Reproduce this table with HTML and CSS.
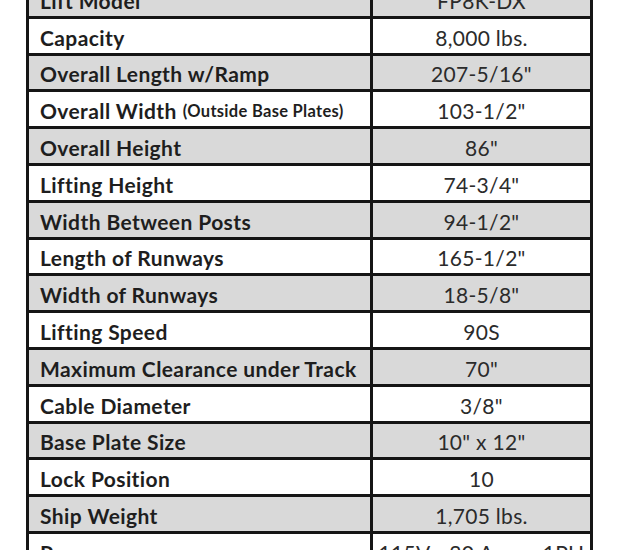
FILE: index.html
```html
<!DOCTYPE html>
<html>
<head>
<meta charset="utf-8">
<link rel="stylesheet" href="styles.css">
</head>
<body>
<div class="spec">
  <div class="row gray"><div class="label">Lift Model</div><div class="value">FP8K-DX</div></div>
  <div class="row"><div class="label">Capacity</div><div class="value">8,000 lbs.</div></div>
  <div class="row gray"><div class="label">Overall Length w/Ramp</div><div class="value">207-5/16"</div></div>
  <div class="row"><div class="label">Overall Width <span class="small">(Outside Base Plates)</span></div><div class="value">103-1/2"</div></div>
  <div class="row gray"><div class="label">Overall Height</div><div class="value">86"</div></div>
  <div class="row"><div class="label">Lifting Height</div><div class="value">74-3/4"</div></div>
  <div class="row gray"><div class="label">Width Between Posts</div><div class="value">94-1/2"</div></div>
  <div class="row"><div class="label">Length of Runways</div><div class="value">165-1/2"</div></div>
  <div class="row gray"><div class="label">Width of Runways</div><div class="value">18-5/8"</div></div>
  <div class="row"><div class="label">Lifting Speed</div><div class="value">90S</div></div>
  <div class="row gray"><div class="label">Maximum Clearance under Track</div><div class="value">70"</div></div>
  <div class="row"><div class="label">Cable Diameter</div><div class="value">3/8"</div></div>
  <div class="row gray"><div class="label">Base Plate Size</div><div class="value">10" x 12"</div></div>
  <div class="row"><div class="label">Lock Position</div><div class="value">10</div></div>
  <div class="row gray"><div class="label">Ship Weight</div><div class="value">1,705 lbs.</div></div>
  <div class="row"><div class="label">Power</div><div class="value">115V - 20 Amp - 1PH</div></div>
</div>
</body>
</html>
```
FILE: styles.css
```css
html, body {
  margin: 0;
  padding: 0;
  background: #ffffff;
  overflow: hidden;
}
body {
  width: 620px;
  height: 550px;
}
.spec {
  margin: -21px 0 0 26px;
  width: 567px;
  box-sizing: border-box;
  background: #151515;
  padding: 3px;
  display: grid;
  grid-auto-rows: 33.8px;
  row-gap: 3px;
  font-family: Lato, "Open Sans", sans-serif;
  font-size: 21px;
}
.row {
  display: grid;
  grid-template-columns: 341px 217px;
  column-gap: 3px;
}
.row > div {
  background: #ffffff;
  display: flex;
  align-items: center;
  padding-top: 3px;
  box-sizing: border-box;
  white-space: nowrap;
}
.row.gray > div {
  background: #d9d9d9;
}
.label {
  font-weight: 700;
  color: #1e1e1e;
  padding-left: 11px;
  letter-spacing: 0.4px;
}
.value {
  justify-content: center;
  color: #2b2b2b;
  letter-spacing: 0.3px;
}
.small {
  font-size: 16.5px;
  margin-left: 6px;
  letter-spacing: 0.3px;
}
```
